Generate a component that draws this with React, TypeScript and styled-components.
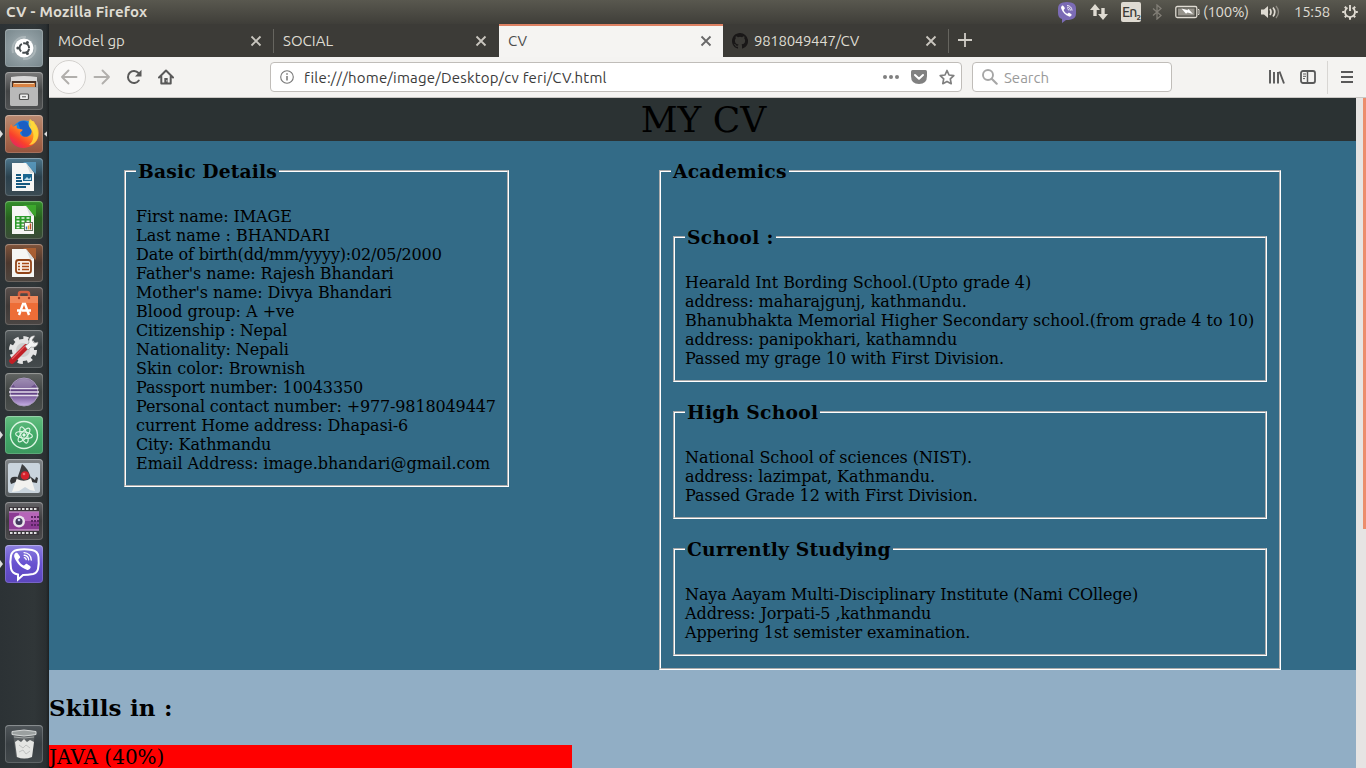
import React from "react";
import styled, { createGlobalStyle, css } from "styled-components";

const Global = createGlobalStyle`
  *{box-sizing:border-box}
  html,body{margin:0;padding:0;overflow:hidden;background:#2c3133}
  svg{display:block;flex:none}
`;
const ui = `"Ubuntu","Noto Sans","Open Sans",sans-serif`;
const Screen = styled.div`width:1366px;height:768px;overflow:hidden;display:flex;flex-direction:column;font-family:${ui};`;
const TopBar = styled.header`height:24px;flex:none;display:flex;align-items:center;padding:0 7px 0 6px;color:#dfdbd2;
  background:linear-gradient(#59584f,#3f3e39);`;
const Title = styled.div`font-size:15px;font-weight:700;letter-spacing:0.2px;line-height:24px;white-space:nowrap;flex:1;`;
const Indicators = styled.div`display:flex;align-items:center;height:24px;`;
const Slot = styled.div<{ $w: number }>`width:${p => p.$w}px;flex:none;display:flex;align-items:center;`;
const Small = styled.span<{ $ls?: number }>`font-size:15px;line-height:24px;white-space:nowrap;letter-spacing:${p => p.$ls ?? 0}px;`;
const Lang = styled.div`width:20px;height:20px;border-radius:2px;background:#dfdbd2;color:#3c3b37;font-size:14px;font-weight:500;line-height:20px;padding-left:1px;letter-spacing:-0.8px;white-space:nowrap;
  sub{font-size:8px;line-height:0;vertical-align:-3px;font-weight:700;}`;

const Body = styled.div`display:flex;flex:1;min-height:0;`;
const Dock = styled.nav`width:49px;flex:none;display:flex;flex-direction:column;justify-content:space-between;padding:5px 0 5px;
  background:linear-gradient(90deg,#2c3235,#303638 70%,#2a2f31 94%,#1c2022);`;
const DockGroup = styled.div`display:flex;flex-direction:column;gap:5px;`;
const DockRow = styled.div`height:38px;display:flex;align-items:center;`;
const Pip = styled.div<{ $on?: boolean; $right?: boolean }>`width:5px;height:8px;flex:none;
  ${p => p.$on && css`background:#dcdcdc;clip-path:${p.$right ? "polygon(20% 50%,80% 15%,80% 85%)" : "polygon(0 0,60% 50%,0 100%)"};`}`;
const Tile = styled.div<{ $bg: string }>`width:38px;height:38px;border-radius:4px;background:${p => p.$bg};flex:none;
  box-shadow:inset 0 0 0 1px rgba(255,255,255,.16),inset 0 1px 1px rgba(255,255,255,.22);display:flex;align-items:center;justify-content:center;`;

const Browser = styled.main`width:1317px;flex:none;display:flex;flex-direction:column;`;
const Tabs = styled.div`height:33px;flex:none;display:flex;background:#3c3b37;`;
const Tab = styled.div<{ $active?: boolean; $line?: boolean; $w: number }>`width:${p => p.$w}px;display:flex;align-items:center;padding:0 12px 0 9px;position:relative;
  color:${p => (p.$active ? "#4c4c4c" : "#dfdbd2")};font-size:15px;
  ${p => p.$active && css`background:#f5f4f2;border-top:2px solid #dd8163;padding-bottom:2px;padding-right:11px;`}
  ${p => p.$line && css`&::after{content:"";position:absolute;right:0;top:5px;bottom:4px;width:1px;background:#66655f;}`}
  svg.fav{margin-right:6px;}`;
const TabText = styled.span<{ $ls: number }>`flex:1;letter-spacing:${p => p.$ls}px;white-space:nowrap;`;
const NewTab = styled.div`width:36px;display:flex;align-items:center;padding-left:9px;padding-bottom:2px;`;
const Toolbar = styled.div`height:41px;flex:none;display:flex;align-items:center;background:#f4f3f1;border-bottom:1px solid #c9c7c4;padding-left:3px;`;
const Back = styled.div`width:34px;height:34px;border:1px solid #d3d1ce;background:#faf9f8;border-radius:50%;display:flex;align-items:center;justify-content:center;`;
const Nav = styled.div<{ $ml: number }>`margin-left:${p => p.$ml}px;`;
const Field = styled.div<{ $w: number; $ml: number }>`width:${p => p.$w}px;height:30px;margin-left:${p => p.$ml}px;background:#fff;border:1px solid #c0bdb9;border-radius:4px;display:flex;align-items:center;padding:0 6px 0 9px;`;
const Url = styled.span`font-size:15px;color:#3b3b3b;letter-spacing:0.2px;margin-left:10px;padding-top:1px;flex:1;white-space:nowrap;`;
const Placeholder = styled.span`font-size:15px;color:#9a9a9a;margin-left:6px;padding-top:1px;`;
const Divider = styled.div`width:1px;height:33px;background:#d8d6d3;margin:0 12px 0 11px;`;

const Viewport = styled.div`flex:1;min-height:0;display:flex;overflow:hidden;`;
const Page = styled.div`width:1307px;flex:none;font-family:"DejaVu Serif",serif;font-size:16px;color:#000;background:#91aec5;overflow:hidden;`;
const Scroll = styled.div`width:10px;background:#e6e4e3;display:flex;justify-content:flex-end;`;
const Thumb = styled.div`width:3px;height:431px;background:#ec8d6c;`;
const Banner = styled.h1`margin:0;height:43px;background:#2b3233;color:#000;text-align:center;font-size:36px;font-weight:400;line-height:44px;padding-left:2px;`;
const Blue = styled.section`height:529px;background:#336b87;display:flex;align-items:flex-start;padding:19px 75px 0;justify-content:space-between;`;
const Frame = styled.fieldset<{ $w?: number; $h: number; $pad: number; $mt?: number }>`
  ${p => p.$w && css`width:${p.$w}px;`} height:${p => p.$h}px;margin:${p => p.$mt ?? 0}px 0 0;border:2px groove #fff;min-width:0;
  padding:${p => p.$pad}px 12px 0 10px;
  & & {margin-left:2px;}
`;
const Legend = styled.legend<{ $ls: number }>`padding:0 2px;font-size:18.72px;font-weight:700;line-height:22px;height:22px;white-space:nowrap;letter-spacing:${p => p.$ls}px;`;
const Line = styled.div<{ $ls: number }>`height:19px;line-height:19px;white-space:nowrap;letter-spacing:${p => p.$ls}px;`;
const Skills = styled.h2`margin:0;font-size:23px;letter-spacing:0.17px;line-height:28px;padding-top:24px;height:75px;`;
const Bar = styled.div`width:523px;height:30px;background:#f00;font-size:20px;line-height:24px;`;

type Text = [string, number];
const basics: Text[] = [["First name: IMAGE", -0.09], ["Last name : BHANDARI", 0], ["Date of birth(dd/mm/yyyy):02/05/2000", -0.165], ["Father's name: Rajesh Bhandari", -0.1], ["Mother's name: Divya Bhandari", -0.06], ["Blood group: A +ve", 0], ["Citizenship : Nepal", -0.2], ["Nationality: Nepali", -0.07], ["Skin color: Brownish", 0], ["Passport number: 10043350", -0.12], ["Personal contact number: +977-9818049447", -0.135], ["current Home address: Dhapasi-6", -0.08], ["City: Kathmandu", -0.12], ["Email Address: image.bhandari@gmail.com", -0.03]];
const schools: { t: string; ls: number; h: number; mt: number; l: Text[] }[] = [
  { t: "School :", ls: 0.35, h: 156, mt: 44, l: [["Hearald Int Bording School.(Upto grade 4)", -0.05], ["address: maharajgunj, kathmandu.", -0.05], ["Bhanubhakta Memorial Higher Secondary school.(from grade 4 to 10)", -0.025], ["address: panipokhari, kathamndu", -0.03], ["Passed my grage 10 with First Division.", -0.09]] },
  { t: "High School", ls: 0.27, h: 118, mt: 19, l: [["National School of sciences (NIST).", -0.04], ["address: lazimpat, Kathmandu.", -0.09], ["Passed Grade 12 with First Division.", -0.08]] },
  { t: "Currently Studying", ls: 0.2, h: 118, mt: 19, l: [["Naya Aayam Multi-Disciplinary Institute (Nami COllege)", -0.1], ["Address: Jorpati-5 ,kathmandu", -0.07], ["Appering 1st semister examination.", -0.12]] },
];
const Lines = ({ items }: { items: Text[] }) => <>{items.map(([t, ls]) => <Line key={t} $ls={ls}>{t}</Line>)}</>;

const Close = ({ c = "#c9c6bf" }) => <svg width="12" height="12" viewBox="0 0 12 12"><path d="M1.5 1.5l9 9M10.5 1.5l-9 9" stroke={c} strokeWidth="1.8" /></svg>;
const Github = () => <svg className="fav" width="16" height="16" viewBox="0 0 16 16"><path fill="#191717" d="M8 0C3.58 0 0 3.58 0 8c0 3.54 2.29 6.53 5.47 7.59.4.07.55-.17.55-.38v-1.49c-2.01.37-2.53-.49-2.69-.94-.09-.23-.48-.94-.82-1.13-.28-.15-.68-.52-.01-.53.63-.01 1.08.58 1.23.82.72 1.21 1.87.87 2.33.66.07-.52.28-.87.51-1.07-1.78-.2-3.64-.89-3.64-3.95 0-.87.31-1.59.82-2.15-.08-.2-.36-1.02.08-2.12 0 0 .67-.21 2.2.82a7.6 7.6 0 0 1 4 0c1.53-1.04 2.2-.82 2.2-.82.44 1.1.16 1.92.08 2.12.51.56.82 1.27.82 2.15 0 3.07-1.87 3.75-3.65 3.95.29.25.54.73.54 1.48v2.2c0 .21.15.46.55.38A8 8 0 0 0 8 0z" /></svg>;
const Arrow = ({ flip = false }) => <svg width="18" height="16" viewBox="0 0 18 16"><path transform={flip ? "translate(18 0) scale(-1 1)" : undefined} d="M8.5 1.5L2 8l6.5 6.5M2 8h14.5" fill="none" stroke="#b1afac" strokeWidth="1.9" strokeLinecap="round" strokeLinejoin="round" /></svg>;
const Phone = ({ s = 1 }) => <g transform={`scale(${s})`}><path d="M10 9c1-.9 2-.5 2.8.6l1.6 2.3c.5.9.2 1.5-.6 2.1-1 .7-1 1.4-.4 2.5 1 1.8 2.5 3.3 4.3 4.1 1 .4 1.3.1 1.9-.6.7-.9 1.3-.9 2.2-.4l2.2 1.5c1 .7 1.2 1.5.5 2.5-.9 1.3-2 2-3.4 1.5-5.6-2.2-9.8-6.5-12-12.2-.5-1.5-.1-2.9.9-3.9z" fill="#fff" /><path d="M18.5 8.3c4 .3 6.8 3.2 7 7.2M18.6 10.9c2.6.2 4.2 1.9 4.4 4.5M18.8 13.3c1.1.1 1.7.8 1.8 1.9" stroke="#fff" strokeWidth="1.3" fill="none" strokeLinecap="round" /></g>;

const Doc = ({ c, children }: { c: string; children: React.ReactNode }) => <svg width="38" height="38" viewBox="0 0 38 38"><path d="M18 4h13v12z" fill={c} opacity=".75" /><path d="M7 5h14l8 10v18H7z" fill="#f6f6f4" /><path d="M21 5l8 10h-4z" fill="#d8dcdc" />{children}</svg>;

const apps: { bg: string; l?: boolean; r?: boolean; icon: React.ReactNode }[] = [
  { bg: "radial-gradient(circle,#b1babd 0,#8b999e 55%,#77868b)", icon: <svg width="38" height="38" viewBox="0 0 38 38"><path d="M8 24c-2-9 4-17 13-16M30 16c2 8-4 15-12 14" fill="none" stroke="#c3cbce" strokeWidth="2" opacity=".5" /><circle cx="19" cy="19" r="9.5" fill="#fff" /><circle cx="19.3" cy="19" r="4.8" fill="none" stroke="#454b4e" strokeWidth="2" strokeDasharray="8.7 1.35" strokeDashoffset="-.7" /><circle cx="12.8" cy="19" r="1.5" fill="#454b4e" /><circle cx="22.4" cy="13.5" r="1.5" fill="#454b4e" /><circle cx="22.4" cy="24.5" r="1.5" fill="#454b4e" /></svg> },
  { bg: "linear-gradient(#7b7b7b,#434546 50%,#505253)", icon: <svg width="38" height="38" viewBox="0 0 38 38"><path d="M6 5q13-2 26 0v5H6z" fill="#d8d8d8" /><rect x="5" y="9" width="28" height="25" rx="2" fill="#adadad" /><rect x="7" y="9" width="24" height="6" fill="#493226" /><path d="M8 11h22v4H8z" fill="#d98243" /><path d="M9 11h20v1H9z" fill="#f5d9b6" /><path d="M5 16h28v16q0 2-2 2H7q-2 0-2-2z" fill="#b9b9b9" /><rect x="14.5" y="22" width="9" height="5.5" rx="1" fill="#eee" stroke="#505050" strokeWidth="1.2" /><path d="M17 24.8h4" stroke="#555" /></svg> },
  { bg: "linear-gradient(#b98a72,#a86a4d 60%,#96553e)", l: true, r: true, icon: <svg width="38" height="38" viewBox="0 0 38 38"><defs><linearGradient id="ff" x1="1" y1="0" x2="0.2" y2="1"><stop offset="0" stopColor="#ffe14a" /><stop offset=".4" stopColor="#ff9b20" /><stop offset=".75" stopColor="#f9402c" /><stop offset="1" stopColor="#e22269" /></linearGradient></defs><circle cx="19" cy="17" r="11.5" fill="#1787e5" /><path d="M13 8q6-4 10 0l4 9-8 8z" fill="#1c5fc4" /><path d="M6 9l2 3c1-1 2.200-1.600 4-1.600-1 2 0 3 1.500 3.300l4 .7c.3 1.500-1.800 2.300-2.600 3 .4 4 5.500 5.500 9 3.500 3.500-2 3.500-6 1-9 2-1 1.500-3 0-5 3-1.500 4-1.500 5 1.500 5 5 5.200 14 .5 19.200C24 35 13 34.500 7.500 28 3 22.500 3.500 14 6 9z" fill="url(#ff)" /><path d="M25 4c4 3 9 10 8 17-1 6-5 9-9 9 5-4 6-12 2-16-3-3-3-6-1-10z" fill="#ffdc3c" opacity=".85" /></svg> },
  { bg: "linear-gradient(#4d768c,#2b414d 50%,#3b4b53)", icon: <Doc c="#5ba2cb"><path d="M11 17h5M11 20h5M11 23h6M11 26h14M11 29h10" stroke="#175a80" strokeWidth="1.8" /><rect x="18" y="16" width="9" height="7" fill="#1c6790" /><path d="M19 22l3-3 2 2 2-2v3z" fill="#b9dbea" /></Doc> },
  { bg: "linear-gradient(#33912a,#286020 45%,#3b4a39)", icon: <Doc c="#42b52f"><rect x="10" y="15" width="16" height="13" fill="#2a9a28" /><path d="M11.500 17h3M16.500 17h3M21.500 17h3M11.500 20.300h3M16.500 20.300h3M21.500 20.300h3M11.500 23.600h3M16.500 23.600h3M11.500 26.500h3M16.500 26.500h3" stroke="#e8f6e5" strokeWidth="1.7" /><rect x="19.500" y="21.500" width="8" height="8" fill="#fff" stroke="#66745f" /><path d="M21.500 28.500v-3" stroke="#3979b4" strokeWidth="1.500" /><path d="M23.500 28.500v-4" stroke="#e8aa30" strokeWidth="1.500" /><path d="M25.500 28.500v-6" stroke="#ba502e" strokeWidth="1.500" /></Doc> },
  { bg: "linear-gradient(#81543b,#4c382e 50%,#4e4640)", icon: <Doc c="#bd6733"><rect x="11" y="16" width="15" height="13" rx="2.500" fill="#f9eee4" stroke="#914318" strokeWidth="1.800" /><path d="M13 19.500h2M17 19.500h7M13 22.500h2M17 22.500h7M13 25.500h2M17 25.500h7" stroke="#a94b18" strokeWidth="1.700" /></Doc> },
  { bg: "linear-gradient(#5a504d,#3f3937 50%,#4b4644)", icon: <svg width="38" height="38" viewBox="0 0 38 38"><path d="M14 10V7q0-2 2-2h6q2 0 2 2v3" fill="none" stroke="#d45f40" strokeWidth="2.5" /><path d="M5 9h28v24H5z" fill="#ed6d37" /><path d="M5 9h28v7H5z" fill="#f0885b" /><circle cx="14" cy="11" r="1.200" fill="#a63d24" /><circle cx="24" cy="11" r="1.200" fill="#a63d24" /><path d="M14 28l4-11h2l4 11M12 23.500h3M17 23.500h9" fill="none" stroke="#fff" strokeWidth="2.400" /></svg> },
  { bg: "linear-gradient(#565c5e,#383e40 45%,#454b4d)", icon: <svg width="38" height="38" viewBox="0 0 38 38"><circle cx="18" cy="20" r="11" fill="#e4e4e4" /><circle cx="18" cy="20" r="12" fill="none" stroke="#e4e4e4" strokeWidth="4" strokeDasharray="5 4.425" /><circle cx="18" cy="20" r="7" fill="#cdcdcd" /><path d="M7 31L21 17" stroke="#c01f25" strokeWidth="5.500" strokeLinecap="round" /><path d="M7 29L20 16" stroke="#e4575b" strokeWidth="1.300" /><path d="M20 16l4-3c-1-4 2-8 6-7l-3 4 2 3 4-1c0 4-3 6-7 5l-3 3z" fill="#f3f3f3" stroke="#888" strokeWidth=".6" /></svg> },
  { bg: "linear-gradient(#626563,#3e4341 50%,#4a4e4c)", icon: <svg width="38" height="38" viewBox="0 0 38 38"><defs><linearGradient id="ec" x2="0" y2="1"><stop stopColor="#8b78a2" /><stop offset=".5" stopColor="#57377b" /><stop offset="1" stopColor="#c8b0e6" /></linearGradient></defs><circle cx="19" cy="19" r="14" fill="url(#ec)" stroke="#a99abd" /><path d="M8 11q11-10 22 0l-4 3H10z" fill="#c6bad3" opacity=".35" /><path d="M4.500 15.500h29M4 19h30M4.500 22.500h29" stroke="#e5ddec" strokeWidth="1.500" /></svg> },
  { bg: "linear-gradient(#64bd80,#42aa68 50%,#3c985f)", l: true, icon: <svg width="38" height="38" viewBox="0 0 38 38" fill="none" stroke="#dcf5e3"><circle cx="19" cy="19" r="13.5" strokeWidth="1.4" /><g strokeWidth="1.2"><ellipse cx="19" cy="19" rx="3.2" ry="8.5" transform="rotate(-20 19 19)" /><ellipse cx="19" cy="19" rx="3.2" ry="8.5" transform="rotate(40 19 19)" /><ellipse cx="19" cy="19" rx="3.2" ry="8.5" transform="rotate(100 19 19)" /></g><circle cx="19" cy="19" r="1.2" fill="#fff" /></svg> },
  { bg: "linear-gradient(#7e8386,#555a5c)", icon: <svg width="38" height="38" viewBox="0 0 38 38"><rect x="3" y="4" width="32" height="30" rx="2" fill="#c9d4dd" /><path d="M13 18q-5-1-7 1l-1 3 1 3 5-2zM26 18l4 3 1-3 2 1-1 5-6-1z" fill="#343638" /><path d="M12 19q7-4 14 0l4 13-5-1-5-3-6 4-7 1z" fill="#f2f2ef" /><path d="M17 5q6 4 9 14-6 5-14 1 3-8 5-15z" fill="#3d3f41" /><circle cx="20" cy="16.500" r="4.300" fill="#d3212c" /><circle cx="19" cy="15" r="1.300" fill="#ec6b70" /></svg> },
  { bg: "linear-gradient(#636366,#3d3c3e 50%,#4b4a4c)", icon: <svg width="38" height="38" viewBox="0 0 38 38"><rect x="4" y="5" width="30" height="28" fill="#3b353b" /><path d="M5 7h28M5 31h28" stroke="#dedede" strokeWidth="2" strokeDasharray="2.5 1.5" /><rect x="4" y="9.5" width="30" height="19" fill="#8c3b94" /><path d="M4 10h30M4 28h30" stroke="#dab6dc" /><path d="M14 10.500h20V19H14z" fill="#b665b8" /><circle cx="14" cy="19.500" r="6" fill="#e9e4ec" /><circle cx="14" cy="19.500" r="3.500" fill="#41385b" /><circle cx="14" cy="18" r="1.300" fill="#c9cbea" /><path d="M26 15h8M26 19h8M26 23h8" stroke="#5b2464" strokeWidth="2" strokeDasharray="2 1" /></svg> },
  { bg: "linear-gradient(#8c80df,#6751d0 50%,#5c46bd)", l: true, icon: <svg width="38" height="38" viewBox="0 0 38 38"><path d="M12 5Q19 3.500 27 5q6 1 6.500 7 .7 7-.5 12-1 4-5 5-5 1-10 1l-5 4.500v-5q-6-1-7-6-1.300-6 0-13 1-4.500 6-5.500z" fill="none" stroke="#fff" strokeWidth="2" /><g transform="translate(0 -1)"><Phone s={1.03} /></g></svg> },
];

export default function App() {
  return <><Global /><Screen>
    <TopBar><Title>CV - Mozilla Firefox</Title>
      <Indicators>
        <Slot $w={33}><svg width="22" height="22" viewBox="0 0 22 22"><path d="M6 1.500q4-1 8 0 5 1 5 6v5q0 5-5 6-3 .6-5 .5L5 22v-4q-4-1-4-6V7.500q0-5 5-6z" fill="#7b6bb5" /><g transform="translate(-1.800 -1)"><Phone s={0.66} /></g></svg></Slot>
        <Slot $w={31}><svg width="18" height="16" viewBox="0 0 18 16" fill="#dfdbd2"><path d="M5 0l5 6H6.700v6H3.300V6H0zM13 16l5-6h-3.300V4h-3.400v6H8z" /></svg></Slot>
        <Slot $w={31}><Lang>En<sub>2</sub></Lang></Slot>
        <Slot $w={23}><svg width="10" height="16" viewBox="0 0 10 16"><path d="M1 4.500l8 7L5 15V1l4 3.500-8 7" fill="none" stroke="#827f77" strokeWidth="1.3" /></svg></Slot>
        <Slot $w={28}><svg width="25" height="14" viewBox="0 0 25 14"><rect x=".8" y="1.500" width="21" height="11" rx="1.500" fill="none" stroke="#dfdbd2" strokeWidth="1.300" /><rect x="3" y="3.500" width="16.500" height="7" fill="#96938b" /><path d="M23 4.500h1v5h-1" stroke="#dfdbd2" fill="none" /><path d="M6.500 3.500l6 1.700 1-1.200 4.500 5-5.500-1.500-1.500 1.300z" fill="#fff" /></svg></Slot>
        <Slot $w={58}><Small $ls={-0.3}>(100%)</Small></Slot>
        <Slot $w={33}><svg width="20" height="16" viewBox="0 0 20 16"><path d="M0 5.500h3L7 2v12L3 10.500H0z" fill="#dfdbd2" /><path d="M9 5q2 3 0 6M12 3.500q3.500 4.500 0 9" fill="none" stroke="#dfdbd2" strokeWidth="1.700" /><path d="M15 2q5 6 0 12" fill="none" stroke="#8d8a82" strokeWidth="1.300" /></svg></Slot>
        <Slot $w={47}><Small $ls={-0.3}>15:58</Small></Slot>
        <svg width="18" height="18" viewBox="0 0 18 18" fill="none" stroke="#dfdbd2"><path d="M6.500 4.700a5 5 0 1 0 5 0" strokeWidth="1.800" /><path d="M9 2v6" strokeWidth="1.900" /><path d="M3.800 3.800l1.500 1.500M14.200 3.800l-1.500 1.500M1.200 9h2.300M14.500 9h2.300M3.800 14.200l1.500-1.500M14.200 14.200l-1.500-1.500M9 14v2.800" strokeWidth="2" /></svg>
      </Indicators></TopBar>
    <Body>
      <Dock><DockGroup>{apps.map((a, i) => <DockRow key={i}><Pip $on={a.l} /><Tile $bg={a.bg}>{a.icon}</Tile><Pip $on={a.r} $right /></DockRow>)}</DockGroup>
        <DockRow><Pip /><Tile $bg="linear-gradient(#50565a,#383e42 50%,#42484b)"><svg width="38" height="38" viewBox="0 0 38 38"><path d="M8 8l3 24q8 3 16 0l3-24z" fill="#6b7071" opacity=".65" /><path d="M10 17l3-2 3 2 3-3 3 3 3-2 4 2-2 15q-8 3-15 0z" fill="#e4e5e3" /><path d="M14 20l4 3 3-3 4 3M14 27l4-2 3 4 4-3" stroke="#bfc1c0" fill="none" /><path d="M7 6.500q12-3 24 0v3q-12 3-24 0z" fill="#9ba0a0" stroke="#d4d7d7" /><path d="M9 12q10 2 20 0" stroke="#a4a8a8" fill="none" /></svg></Tile></DockRow>
      </Dock>
      <Browser>
        <Tabs>
          <Tab $w={225} $line><TabText $ls={0.05}>MOdel gp</TabText><Close /></Tab>
          <Tab $w={225}><TabText $ls={0.05}>SOCIAL</TabText><Close /></Tab>
          <Tab $w={224} $active><TabText $ls={0}>CV</TabText><Close c="#686868" /></Tab>
          <Tab $w={226} $line><Github /><TabText $ls={-0.3}>9818049447/CV</TabText><Close /></Tab>
          <NewTab><svg width="14" height="14" viewBox="0 0 14 14"><path d="M7 0v14M0 7h14" stroke="#d0cdc6" strokeWidth="1.8" /></svg></NewTab>
        </Tabs>
        <Toolbar>
          <Back><Arrow /></Back>
          <Nav $ml={7}><Arrow flip /></Nav>
          <Nav $ml={15}><svg width="16" height="16" viewBox="0 0 16 16"><path d="M12.800 11.500A6 6 0 1 1 12.500 4" fill="none" stroke="#595959" strokeWidth="2" strokeLinecap="round" /><path d="M15.500 .8v6.700H9z" fill="#595959" /></svg></Nav>
          <Nav $ml={16}><svg width="16" height="16" viewBox="0 0 16 16"><path d="M1 8.500L8 1.500l7 7M3.300 7.500V14.500h9.400V7.500" fill="none" stroke="#595959" strokeWidth="2" strokeLinecap="round" strokeLinejoin="round" /><path d="M6.300 9h3.400v5.500H6.300z" fill="#595959" /><circle cx="8.800" cy="11.800" r=".6" fill="#fff" /></svg></Nav>
          <Field $w={692} $ml={96}>
            <svg width="14" height="14" viewBox="0 0 14 14"><circle cx="7" cy="7" r="6.300" fill="none" stroke="#777" strokeWidth="1.100" /><path d="M7 6v4.500M7 3.300v1.500" stroke="#777" strokeWidth="1.500" /></svg>
            <Url>file:///home/image/Desktop/cv feri/CV.html</Url>
            <svg width="72" height="16" viewBox="0 0 72 16"><g fill="#808080"><circle cx="2" cy="8" r="2" /><circle cx="8" cy="8" r="2" /><circle cx="14" cy="8" r="2" /><path d="M29.500 1h13q1.500 0 1.500 1.500V7q0 8-8 8t-8-8V2.500Q28 1 29.500 1z" /></g><path d="M32 6l4 3.700L40 6" fill="none" stroke="#fff" strokeWidth="2" strokeLinecap="round" strokeLinejoin="round" /><path d="M64 1.500l2 4.500 4.800.6-3.500 3.300.9 4.800-4.200-2.300-4.200 2.300.9-4.800L57.200 6.600 62 6z" fill="none" stroke="#808080" strokeWidth="1.700" strokeLinejoin="round" /></svg>
          </Field>
          <Field $w={200} $ml={10}><svg width="16" height="16" viewBox="0 0 16 16"><circle cx="6" cy="6" r="5" fill="none" stroke="#a6a6a6" strokeWidth="1.900" /><path d="M9.700 9.700l5 5" stroke="#a6a6a6" strokeWidth="2.100" strokeLinecap="round" /></svg><Placeholder>Search</Placeholder></Field>
          <Nav $ml={97}><svg width="16" height="16" viewBox="0 0 16 16"><path d="M1 1v13.500M5 3v11.500M9 3v11.500M10.500 2.500l4.500 12" fill="none" stroke="#595959" strokeWidth="1.900" /></svg></Nav>
          <Nav $ml={15}><svg width="16" height="14" viewBox="0 0 16 14"><rect x="1" y="1" width="14" height="12" rx="2" fill="none" stroke="#595959" strokeWidth="1.800" /><path d="M7.500 1v12" stroke="#595959" strokeWidth="1.500" /><path d="M3 4h3M3 6.300h3M3 8.600h2" stroke="#595959" /></svg></Nav>
          <Divider />
          <svg width="14" height="14" viewBox="0 0 14 14"><path d="M1 2h12M1 7h12M1 12h12" stroke="#595959" strokeWidth="2" /></svg>
        </Toolbar>
        <Viewport>
          <Page>
            <Banner>MY CV</Banner>
            <Blue>
              <Frame $w={385} $h={327} $pad={25}><Legend $ls={0.15}>Basic Details</Legend><Lines items={basics} /></Frame>
              <Frame $w={622} $h={510} $pad={0}><Legend $ls={0.2}>Academics</Legend>
                {schools.map(s => <Frame key={s.t} $h={s.h} $pad={25} $mt={s.mt}><Legend $ls={s.ls}>{s.t}</Legend><Lines items={s.l} /></Frame>)}
              </Frame>
            </Blue>
            <Skills>Skills in :</Skills>
            <Bar>JAVA (40%)</Bar>
          </Page>
          <Scroll><Thumb /></Scroll>
        </Viewport>
      </Browser>
    </Body>
  </Screen></>;
}
